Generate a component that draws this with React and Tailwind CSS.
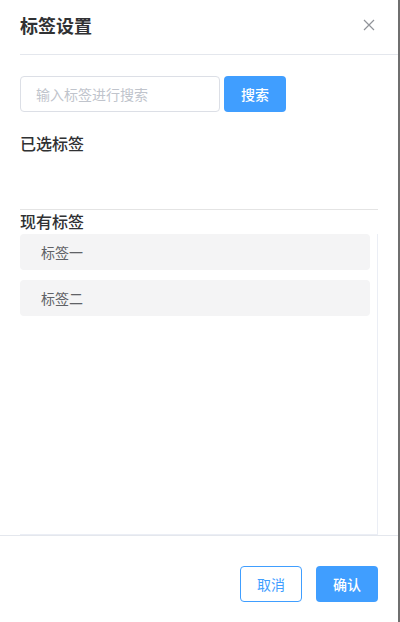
import { useState } from "react";

const font = { fontFamily: '"Noto Sans CJK SC", "Noto Sans", sans-serif' };

const TagDialog = () => {
  const [keyword, setKeyword] = useState("");
  const [tags] = useState(["标签一", "标签二"]);

  return (
    <div className="flex h-[622px] w-[400px] bg-[#6f6f6f]" style={font}>
      {/* PANEL */}
      <div className="flex h-full w-[398px] flex-col bg-white">
        {/* HEADER */}
        <div className="flex h-[54px] items-center justify-between pb-[4px] pl-5 pr-[21px]">
          <h2 className="text-[18px] font-bold leading-6 text-[#303133]">标签设置</h2>
          <button className="flex h-4 w-4 items-center justify-center">
            <svg width="12" height="12" viewBox="0 0 12 12" fill="none">
              <path d="M1 1L11 11M11 1L1 11" stroke="#909399" strokeWidth="1.2" />
            </svg>
          </button>
        </div>
        <div className="ml-5 h-px bg-[#e4e7ed]" />

        {/* BODY */}
        <div className="flex flex-col px-5 pt-[21px]">
          <div className="flex gap-[4px]">
            <input
              value={keyword}
              onChange={(e) => setKeyword(e.target.value)}
              placeholder="输入标签进行搜索"
              className="h-9 w-[200px] rounded-[4px] border border-[#dcdfe6] px-[15px] text-sm text-[#606266] outline-none placeholder:text-[#c0c4cc]"
            />
            <button className="h-9 w-[62px] rounded-[4px] bg-[#409eff] text-sm font-medium text-white">
              搜索
            </button>
          </div>

          <div className="mt-5 h-[22px] text-base font-medium leading-[22px] text-[#303133]">已选标签</div>
          <div className="h-[55px]" />
          <div className="h-px bg-[#e4e4e4]" />

          <div className="h-[22px] text-base font-medium leading-[22px] text-[#303133]">现有标签</div>

          {/* LIST */}
          <div className="mt-[2px] flex h-[301px] flex-col gap-[10px] border-r border-b border-[#ebeef5] pr-[7px]">
            {tags.map((t) => (
              <div
                key={t}
                className="flex h-9 items-center rounded-[4px] bg-[#f4f4f5] pl-[21px] text-sm text-[#606266]"
              >
                {t}
              </div>
            ))}
          </div>
        </div>

        {/* FOOTER */}
        <div className="flex justify-end gap-[14px] border-t border-[#e4e7ed] pr-5 pt-[30px]">
          <button className="h-9 w-[62px] rounded-[4px] border border-[#409eff] bg-white text-sm text-[#409eff]">
            取消
          </button>
          <button className="h-9 w-[62px] rounded-[4px] bg-[#409eff] text-sm font-medium text-white">
            确认
          </button>
        </div>
      </div>
    </div>
  );
};

export default function App() {
  return <TagDialog />;
}
